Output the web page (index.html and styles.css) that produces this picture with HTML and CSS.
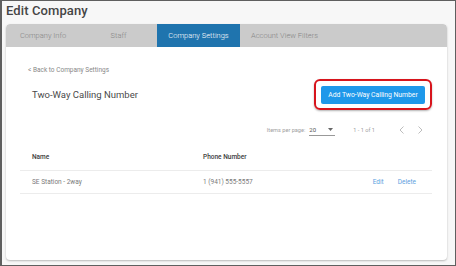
FILE: index.html
```
<!DOCTYPE html>
<html lang="en">
<head>
    <meta charset="UTF-8">
    <meta name="viewport" content="width=device-width, initial-scale=1.0">
    <title>Edit Company</title>
    <link rel="stylesheet" href="styles.css">
</head>
<body>
    <div class="frame">
        <h1 class="page-title">Edit Company</h1>

        <div class="card">
            <!-- Tabs -->
            <div class="tabs">
                <div class="tab tab-info">Company Info</div>
                <div class="tab tab-staff">Staff</div>
                <div class="tab tab-settings active">Company Settings</div>
                <div class="tab tab-filters">Account View Filters</div>
            </div>

            <div class="content">
                <a class="back-link">&lt; Back to Company Settings</a>

                <div class="header-row">
                    <h2 class="section-title">Two-Way Calling Number</h2>
                    <div class="highlight">
                        <button class="add-button">Add Two-Way Calling Number</button>
                    </div>
                </div>

                <!-- Pager -->
                <div class="pager">
                    <span class="pager-label">Items per page:</span>
                    <div class="pager-select">
                        <span>20</span>
                        <svg width="5" height="3" viewBox="0 0 5 3"><path d="M0 0 L5 0 L2.5 3 Z" fill="#666"/></svg>
                    </div>
                    <span class="pager-range">1 - 1 of 1</span>
                    <svg class="chev" width="5" height="8" viewBox="0 0 5 8"><path d="M4.5 0.5 L1 4 L4.5 7.5" fill="none" stroke="#b5b5b5" stroke-width="0.9"/></svg>
                    <svg class="chev chev-next" width="5" height="8" viewBox="0 0 5 8"><path d="M0.5 0.5 L4 4 L0.5 7.5" fill="none" stroke="#b5b5b5" stroke-width="0.9"/></svg>
                </div>

                <!-- Table -->
                <div class="table">
                    <div class="row head">
                        <div class="cell cell-name">Name</div>
                        <div class="cell cell-phone">Phone Number</div>
                    </div>
                    <div class="row">
                        <div class="cell cell-name">SE Station - 2way</div>
                        <div class="cell cell-phone">1 (941) 555-5557</div>
                        <div class="cell cell-actions">
                            <a class="link">Edit</a>
                            <a class="link">Delete</a>
                        </div>
                    </div>
                </div>
            </div>
        </div>
    </div>
</body>
</html>
```

FILE: styles.css
```
body {
    margin: 0;
    font-family: Roboto, "Liberation Sans", Arial, sans-serif;
}

.frame {
    width: 456px;
    height: 266px;
    box-sizing: border-box;
    border: 1px solid #5f5f5f;
    border-left-width: 2px;
    background: #f7f7f7;
    padding: 0 8px 0 4px;
    overflow: hidden;
}

.page-title {
    margin: 0 0 3px 0;
    font-size: 13px;
    line-height: 20px;
    font-weight: 500;
    color: #454545;
    letter-spacing: 0.1px;
}

/* Card */
.card {
    width: 441px;
    height: 236px;
    background: #fff;
    border-radius: 4px;
    box-shadow: 0 1px 2px rgba(0, 0, 0, 0.25);
    overflow: hidden;
}

.tabs {
    display: flex;
    height: 23px;
    background: #cbcbcb;
    border-radius: 4px 4px 0 0;
}

.tab {
    font-size: 7.5px;
    line-height: 23px;
    font-weight: 300;
    color: #858585;
    text-align: center;
}

.tab-info { width: 74px; }
.tab-staff { width: 77px; }
.tab-settings { width: 83px; }
.tab-filters {
    flex: 1;
    text-align: left;
    padding-left: 11px;
}

.tab.active {
    background: #1f74ae;
    color: #fff;
}

.content {
    padding: 18px 15px 0 14px;
}

.back-link {
    display: block;
    margin-left: 8px;
    font-size: 6.5px;
    line-height: 10px;
    color: #888;
}

.header-row {
    display: flex;
    align-items: center;
    justify-content: space-between;
    margin-top: 2px;
    height: 35px;
}

.section-title {
    margin: 0 0 0 12px;
    font-size: 9.5px;
    font-weight: 400;
    color: #4a4a4a;
}

.highlight {
    border: 2px solid #d7141c;
    border-radius: 6px;
    padding: 5px 5px;
    height: 31px;
    box-sizing: border-box;
    width: 118px;
    display: flex;
    align-items: center;
    box-shadow: 0 1px 2px rgba(0, 0, 0, 0.3);
}

.add-button {
    width: 104px;
    height: 18px;
    border: none;
    border-radius: 2px;
    background: #1e98ea;
    color: #fff;
    font-family: inherit;
    font-size: 6.8px;
    padding: 0;
    cursor: pointer;
}

.pager {
    display: flex;
    align-items: center;
    justify-content: flex-end;
    height: 16px;
    margin-top: 10px;
    padding-right: 9px;
    font-size: 5.6px;
    color: #a0a0a0;
}

.pager-select {
    display: flex;
    align-items: center;
    justify-content: space-between;
    width: 26px;
    height: 12px;
    margin-left: 4px;
    border-bottom: 1px solid #999;
    color: #555;
    font-size: 6px;
    box-sizing: border-box;
    padding-right: 2px;
}

.pager-range {
    margin-left: 18px;
}

.chev {
    margin-left: 24px;
}

.chev-next {
    margin-left: 14px;
}

.table {
    margin-top: 6px;
}

.row {
    display: flex;
    align-items: center;
    height: 22px;
    border-bottom: 1px solid #ececec;
    font-size: 6.5px;
    color: #7a7a7a;
}

.row.head {
    height: 26px;
    color: #3c3c3c;
    font-weight: 500;
}

.cell-name {
    width: 171px;
    padding-left: 12px;
}

.cell-phone {
    flex: 1;
    color: #7a7a7a;
}

.row.head .cell-phone {
    color: #3c3c3c;
}

.cell-actions {
    display: flex;
    gap: 14px;
    padding-right: 16px;
}

.link {
    color: #5d9fe0;
}
```
